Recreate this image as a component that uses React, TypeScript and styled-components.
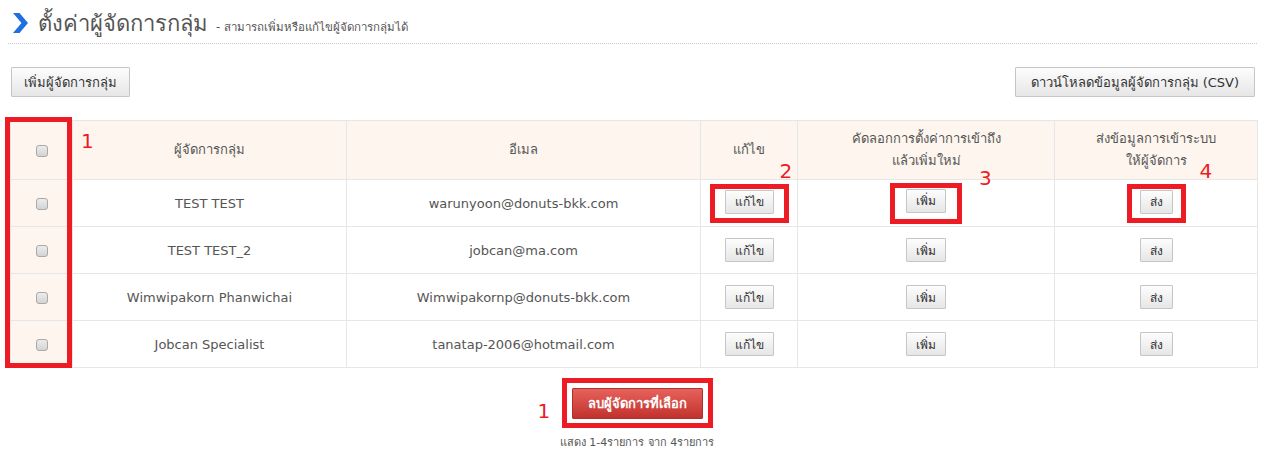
import React from 'react'
import styled, { createGlobalStyle } from 'styled-components'

const GlobalStyle = createGlobalStyle`
	body {
		margin: 0;
		background: #fff;
		font-family: 'DejaVu Sans', 'Noto Sans', sans-serif;
		color: #555;
	}
`

const Page = styled.div`
	width: 1266px;
	padding-bottom: 10px;
`

const TitleBar = styled.div`
	display: flex;
	align-items: flex-end;
	gap: 10px;
	margin: 0 9px 0 8px;
	padding: 10px 0 6px 5px;
	border-bottom: 1px dotted #c8c8c8;
`

const Title = styled.h1`
	margin: 0;
	font-size: 22px;
	font-weight: normal;
	color: #555;
	line-height: 27px;
`

const Subtitle = styled.span`
	margin-left: -2px;
	font-size: 11.5px;
	color: #555;
	line-height: 20px;
`

const Toolbar = styled.div`
	display: flex;
	justify-content: space-between;
	margin-top: 23px;
	padding: 0 11px;
`

const GrayButton = styled.button<{ $small?: boolean; $wide?: boolean }>`
	height: ${p => (p.$small ? '24px' : '30px')};
	padding: ${p => (p.$small ? '0 9px' : p.$wide ? '0 15px' : '0 12px')};
	font-family: inherit;
	font-size: ${p => (p.$small ? '12px' : '13px')};
	color: #333;
	border: 1px solid #c6c6c6;
	border-radius: 1px;
	background: linear-gradient(#fdfdfd, #e6e6e6);
	cursor: pointer;
`

const TableWrap = styled.div`
	position: relative;
	margin: 23px 9px 0 10px;
`

const Table = styled.table`
	width: 1247px;
	border-collapse: collapse;
	table-layout: fixed;
	font-size: 13px;
`

const Th = styled.th`
	height: 58px;
	padding: 0;
	font-weight: normal;
	color: #555;
	line-height: 22px;
	background: #fdf5ee;
	border: 1px solid #e6e6e6;
`

const Td = styled.td<{ $check?: boolean }>`
	height: 46px;
	padding: 0;
	text-align: center;
	color: #555;
	background: ${p => (p.$check ? '#fdf5ee' : '#fff')};
	border: 1px solid #e6e6e6;
`

const Check = styled.input.attrs({ type: 'checkbox' })`
	appearance: none;
	display: inline-block;
	width: 12px;
	height: 12px;
	margin: 0;
	vertical-align: middle;
	border: 1px solid #a9a9a9;
	border-radius: 3px;
	background: linear-gradient(#ececec, #d4d4d4);
`

const RedColour = '#ed1c24'

const Frame = styled.span<{ $px: number; $pt: number; $pb: number }>`
	position: relative;
	display: inline-block;
	padding: ${p => `${p.$pt}px ${p.$px}px ${p.$pb}px`};
	border: 5px solid ${RedColour};
	line-height: 0;
`

const ColumnFrame = styled.div`
	position: absolute;
	left: -5px;
	top: -3px;
	width: 57px;
	height: 241px;
	border: 5px solid ${RedColour};
	pointer-events: none;
`

const Num = styled.span<{ $x: number; $y: number }>`
	position: absolute;
	left: ${p => p.$x}px;
	top: ${p => p.$y}px;
	font-family: 'DejaVu Sans', sans-serif;
	font-size: 20px;
	line-height: 22px;
	color: ${RedColour};
`

const Bottom = styled.div`
	display: flex;
	flex-direction: column;
	align-items: center;
	margin-top: 10px;
	margin-left: 8px;
`

const DeleteButton = styled.button`
	height: 31px;
	padding: 0 15px;
	font-family: inherit;
	font-size: 13px;
	font-weight: bold;
	color: #fff;
	border: 1px solid #b2302b;
	border-radius: 1px;
	background: linear-gradient(#e6625c, #c2322d);
`

const Summary = styled.div`
	margin-top: 5px;
	font-size: 11px;
	color: #555;
`

function Chevron() {
	return (
		<svg width="15" height="20" viewBox="0 0 15 20" style={{ marginBottom: 4 }}>
			<polygon points="0,0 6.5,0 15,10 6.5,20 0,20 8.5,10" fill="#1f6fe0" />
		</svg>
	)
}

const columns = [62, 274, 354, 97, 257, 203]

const managers = [
	{ name: 'TEST TEST', email: 'warunyoon@donuts-bkk.com' },
	{ name: 'TEST TEST_2', email: 'jobcan@ma.com' },
	{ name: 'Wimwipakorn Phanwichai', email: 'Wimwipakornp@donuts-bkk.com' },
	{ name: 'Jobcan Specialist', email: 'tanatap-2006@hotmail.com' },
]

export default function App() {
	return (
		<Page>
			<GlobalStyle />
			<TitleBar>
				<Chevron />
				<Title>ตั้งค่าผู้จัดการกลุ่ม</Title>
				<Subtitle>- สามารถเพิ่มหรือแก้ไขผู้จัดการกลุ่มได้</Subtitle>
			</TitleBar>

			<Toolbar>
				<GrayButton>เพิ่มผู้จัดการกลุ่ม</GrayButton>
				<GrayButton $wide>ดาวน์โหลดข้อมูลผู้จัดการกลุ่ม (CSV)</GrayButton>
			</Toolbar>

			<TableWrap>
				<Table>
					<colgroup>
						{columns.map((w, i) => (
							<col key={i} style={{ width: w }} />
						))}
					</colgroup>
					<thead>
						<tr>
							<Th>
								<Check />
							</Th>
							<Th>ผู้จัดการกลุ่ม</Th>
							<Th>อีเมล</Th>
							<Th>แก้ไข</Th>
							<Th>
								คัดลอกการตั้งค่าการเข้าถึง
								<br />
								แล้วเพิ่มใหม่
							</Th>
							<Th>
								ส่งข้อมูลการเข้าระบบ
								<br />
								ให้ผู้จัดการ
							</Th>
						</tr>
					</thead>
					<tbody>
						{managers.map((m, i) => (
							<tr key={m.email}>
								<Td $check>
									<Check />
								</Td>
								<Td>{m.name}</Td>
								<Td>{m.email}</Td>
								<Td>
									{i === 0 ? (
										<Frame $px={10} $pt={1} $pb={4}>
											<GrayButton $small>แก้ไข</GrayButton>
											<Num $x={65} $y={-29}>2</Num>
										</Frame>
									) : (
										<GrayButton $small>แก้ไข</GrayButton>
									)}
								</Td>
								<Td>
									{i === 0 ? (
										<Frame $px={11} $pt={1} $pb={6}>
											<GrayButton $small>เพิ่ม</GrayButton>
											<Num $x={84} $y={-21}>3</Num>
										</Frame>
									) : (
										<GrayButton $small>เพิ่ม</GrayButton>
									)}
								</Td>
								<Td>
									{i === 0 ? (
										<Frame $px={8} $pt={1} $pb={4}>
											<GrayButton $small>ส่ง</GrayButton>
											<Num $x={68} $y={-29}>4</Num>
										</Frame>
									) : (
										<GrayButton $small>ส่ง</GrayButton>
									)}
								</Td>
							</tr>
						))}
					</tbody>
				</Table>
				<ColumnFrame />
				<Num $x={71} $y={10}>1</Num>
			</TableWrap>

			<Bottom>
				<Frame $px={5} $pt={5} $pb={4}>
					<DeleteButton>ลบผู้จัดการที่เลือก</DeleteButton>
					<Num $x={-29} $y={17}>1</Num>
				</Frame>
				<Summary>แสดง 1-4รายการ จาก 4รายการ</Summary>
			</Bottom>
		</Page>
	)
}
